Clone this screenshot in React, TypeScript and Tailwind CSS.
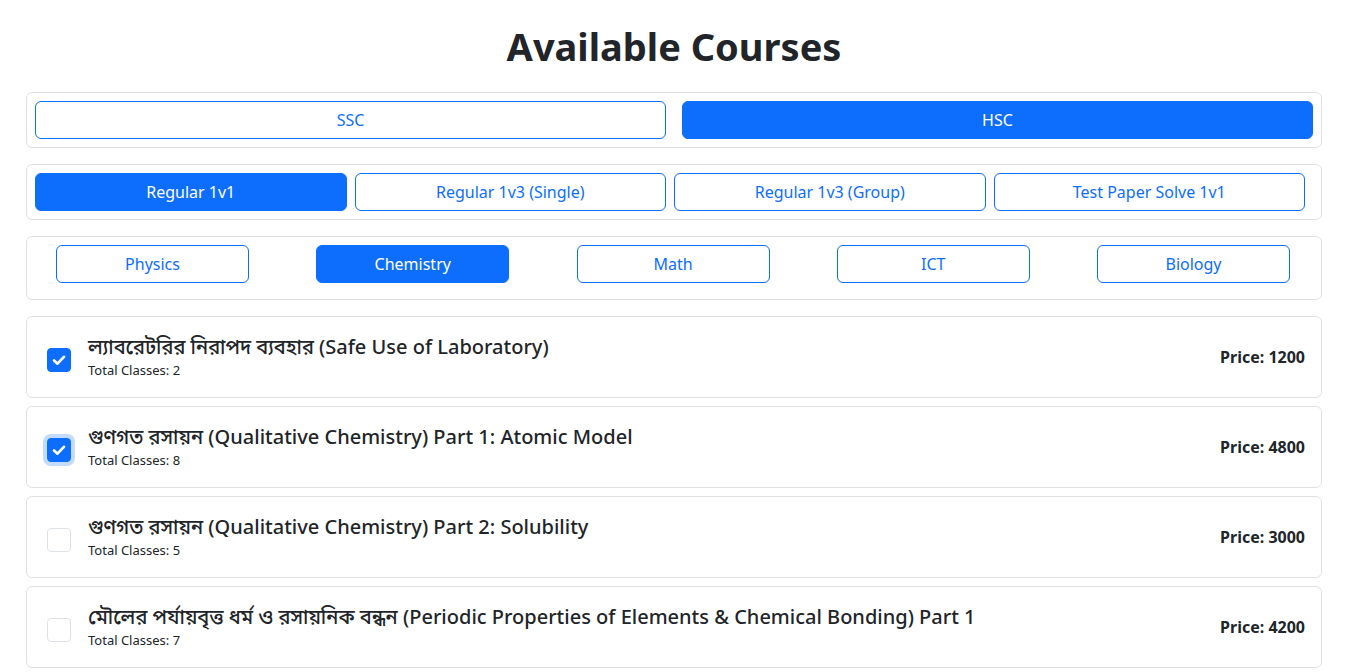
import { useState } from "react";

const levels = ["SSC", "HSC"];
const plans = [
  "Regular 1v1",
  "Regular 1v3 (Single)",
  "Regular 1v3 (Group)",
  "Test Paper Solve 1v1",
];
const subjects = ["Physics", "Chemistry", "Math", "ICT", "Biology"];

const courses = [
  {
    title: "ল্যাবরেটরির নিরাপদ ব্যবহার (Safe Use of Laboratory)",
    classes: 2,
    price: 1200,
  },
  {
    title: "গুণগত রসায়ন (Qualitative Chemistry) Part 1: Atomic Model",
    classes: 8,
    price: 4800,
  },
  {
    title: "গুণগত রসায়ন (Qualitative Chemistry) Part 2: Solubility",
    classes: 5,
    price: 3000,
  },
  {
    title:
      "মৌলের পর্যায়বৃত্ত ধর্ম ও রসায়নিক বন্ধন (Periodic Properties of Elements & Chemical Bonding) Part 1",
    classes: 7,
    price: 4200,
  },
];

function Btn({
  label,
  active,
  onClick,
  className = "",
}: {
  label: string;
  active: boolean;
  onClick: () => void;
  className?: string;
}) {
  return (
    <button
      onClick={onClick}
      className={
        "h-[38px] rounded-md border border-[#0d6efd] text-base " +
        (active ? "bg-[#0d6efd] text-white " : "bg-white text-[#0d6efd] ") +
        className
      }
    >
      {label}
    </button>
  );
}

function Check({ checked, focus }: { checked: boolean; focus?: boolean }) {
  return (
    <div
      className={
        "flex h-6 w-6 shrink-0 items-center justify-center rounded-[4px] border " +
        (checked
          ? "border-[#0d6efd] bg-[#0d6efd] "
          : "border-[#dee2e6] bg-white ") +
        (focus ? "ring-4 ring-[#0d6efd]/25" : "")
      }
    >
      {checked && (
        <svg width="18" height="18" viewBox="0 0 20 20" fill="none">
          <path
            d="M4.5 10.5l3.8 3.6L15.5 6.5"
            stroke="white"
            strokeWidth="3"
            strokeLinecap="round"
            strokeLinejoin="round"
          />
        </svg>
      )}
    </div>
  );
}

export default function App() {
  const [level, setLevel] = useState("HSC");
  const [plan, setPlan] = useState("Regular 1v1");
  const [subject, setSubject] = useState("Chemistry");
  const [picked, setPicked] = useState<number[]>([0, 1]);

  return (
    <div
      className="min-h-screen bg-white text-[#212529]"
      style={{ fontFamily: '"Noto Sans", "Noto Sans Bengali", sans-serif' }}
    >
      <div className="ml-[26px] w-[1296px]">
        <h1 className="mt-[22px] mb-[22px] text-center text-[38px] font-bold leading-[48px]">
          Available Courses
        </h1>

        <div className="mb-4 grid grid-cols-2 gap-4 rounded-md border border-[#dee2e6] p-2">
          {levels.map((l) => (
            <Btn key={l} label={l} active={level === l} onClick={() => setLevel(l)} />
          ))}
        </div>

        <div className="mb-4 grid grid-cols-4 gap-2 rounded-md border border-[#dee2e6] py-2 pl-2 pr-4">
          {plans.map((p) => (
            <Btn key={p} label={p} active={plan === p} onClick={() => setPlan(p)} />
          ))}
        </div>

        <div className="mb-4 flex justify-between rounded-md border border-[#dee2e6] pt-2 pb-4 pl-[29px] pr-[31px]">
          {subjects.map((s) => (
            <Btn
              key={s}
              label={s}
              active={subject === s}
              onClick={() => setSubject(s)}
              className="w-[193px]"
            />
          ))}
        </div>

        <div className="flex flex-col gap-2">
          {courses.map((c, i) => {
            const on = picked.includes(i);
            return (
              <div
                key={i}
                onClick={() =>
                  setPicked(on ? picked.filter((x) => x !== i) : [...picked, i])
                }
                className="flex h-[82px] items-center rounded-md border border-[#dee2e6] pl-5 pr-4"
              >
                <div className="mt-[5px]">
                  <Check checked={on} focus={i === 1} />
                </div>
                <div className="ml-[17px] flex-1">
                  <div className="text-[20px] font-medium leading-6">{c.title}</div>
                  <div className="mt-[2px] text-[13px] leading-[18px]">
                    Total Classes: {c.classes}
                  </div>
                </div>
                <div className="text-base font-bold">Price: {c.price}</div>
              </div>
            );
          })}
        </div>
      </div>
    </div>
  );
}
